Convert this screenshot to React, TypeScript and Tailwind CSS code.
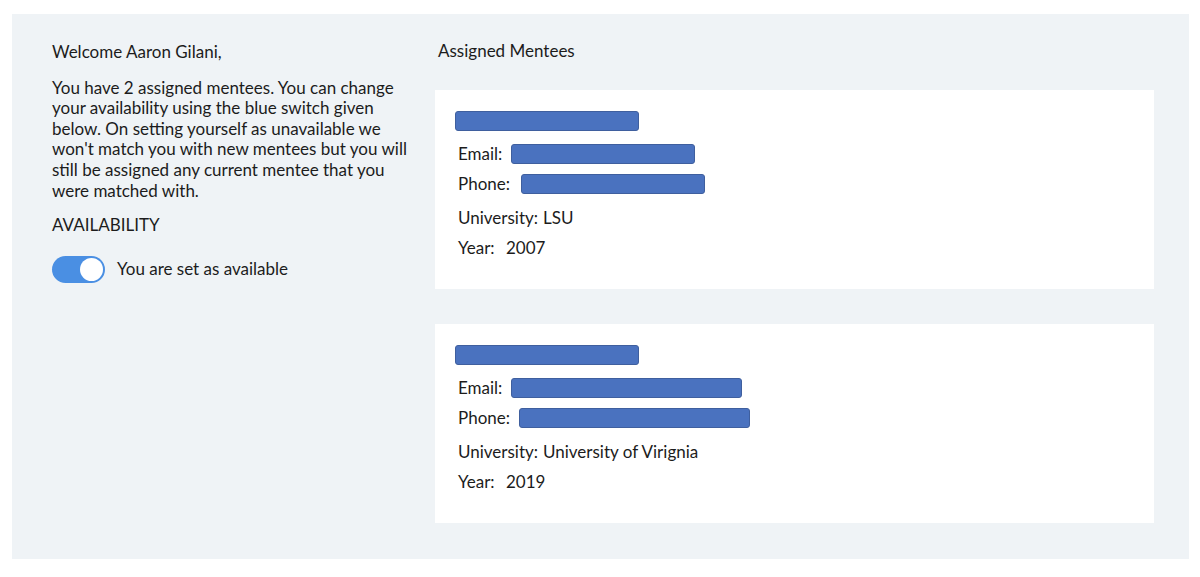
import React from "react";

function Bar({ w }: { w: number }) {
  return (
    <span
      className="inline-block h-[20px] rounded-[3px] border border-[#3f5f9e] bg-[#4a72bf] align-middle"
      style={{ width: w }}
    />
  );
}

function Card({
  nameW,
  emailW,
  emailX,
  phoneW,
  phoneX,
  uni,
  year,
}: {
  nameW: number;
  emailW: number;
  emailX: number;
  phoneW: number;
  phoneX: number;
  uni: string;
  year: string;
}) {
  return (
    <div className="flex h-[199px] flex-col bg-white pl-[20px] pt-[21px]">
      <div className="flex h-[20px] items-center">
        <Bar w={nameW} />
      </div>
      <div className="mt-[13px] flex h-[20px] items-center pl-[3px]">
        <span className="w-[53px] shrink-0" style={{ width: emailX }}>Email:</span>
        <Bar w={emailW} />
      </div>
      <div className="mt-[10px] flex h-[20px] items-center pl-[3px]">
        <span className="shrink-0" style={{ width: phoneX }}>Phone:</span>
        <Bar w={phoneW} />
      </div>
      <div className="mt-[14px] flex h-[20px] items-center pl-[3px]">
        <span className="w-[85px] shrink-0">University:</span>
        <span>{uni}</span>
      </div>
      <div className="mt-[10px] flex h-[20px] items-center pl-[3px]">
        <span className="w-[48px] shrink-0">Year:</span>
        <span>{year}</span>
      </div>
    </div>
  );
}

export default function App() {
  return (
    <div className="h-[577px] w-[1200px] bg-white pl-[12px] pt-[14px] font-['Lato','Liberation_Sans',sans-serif] text-[17px] text-[#1c1c1c]">
      <div className="flex h-[545px] w-[1177px] bg-[#eff3f6]">
        <div className="w-[423px] shrink-0 pl-[40px] pt-[28px] leading-[20.6px]">
          <div>Welcome Aaron Gilani,</div>
          <p className="mt-[15px]">
            You have 2 assigned mentees. You can change
            <br />
            your availability using the blue switch given
            <br />
            below. On setting yourself as unavailable we
            <br />
            won't match you with new mentees but you will
            <br />
            still be assigned any current mentee that you
            <br />
            were matched with.
          </p>
          <div className="mt-[14px]">AVAILABILITY</div>
          <div className="mt-[20px] flex items-center">
            <div className="flex h-[27px] w-[53px] items-center justify-end rounded-full bg-[#4a8fe3] pr-[2px]">
              <div className="h-[23px] w-[23px] rounded-full bg-white" />
            </div>
            <span className="ml-[12px]">You are set as available</span>
          </div>
        </div>
        <div className="w-[719px] shrink-0 pt-[27px]">
          <div className="pl-[3px] leading-[20.5px]">Assigned Mentees</div>
          <div className="mt-[28px] flex flex-col gap-[35px]">
            <Card nameW={184} emailW={184} emailX={53} phoneW={184} phoneX={63} uni="LSU" year="2007" />
            <Card
              nameW={184}
              emailW={231}
              emailX={53}
              phoneW={231}
              phoneX={61}
              uni="University of Virignia"
              year="2019"
            />
          </div>
        </div>
      </div>
    </div>
  );
}
